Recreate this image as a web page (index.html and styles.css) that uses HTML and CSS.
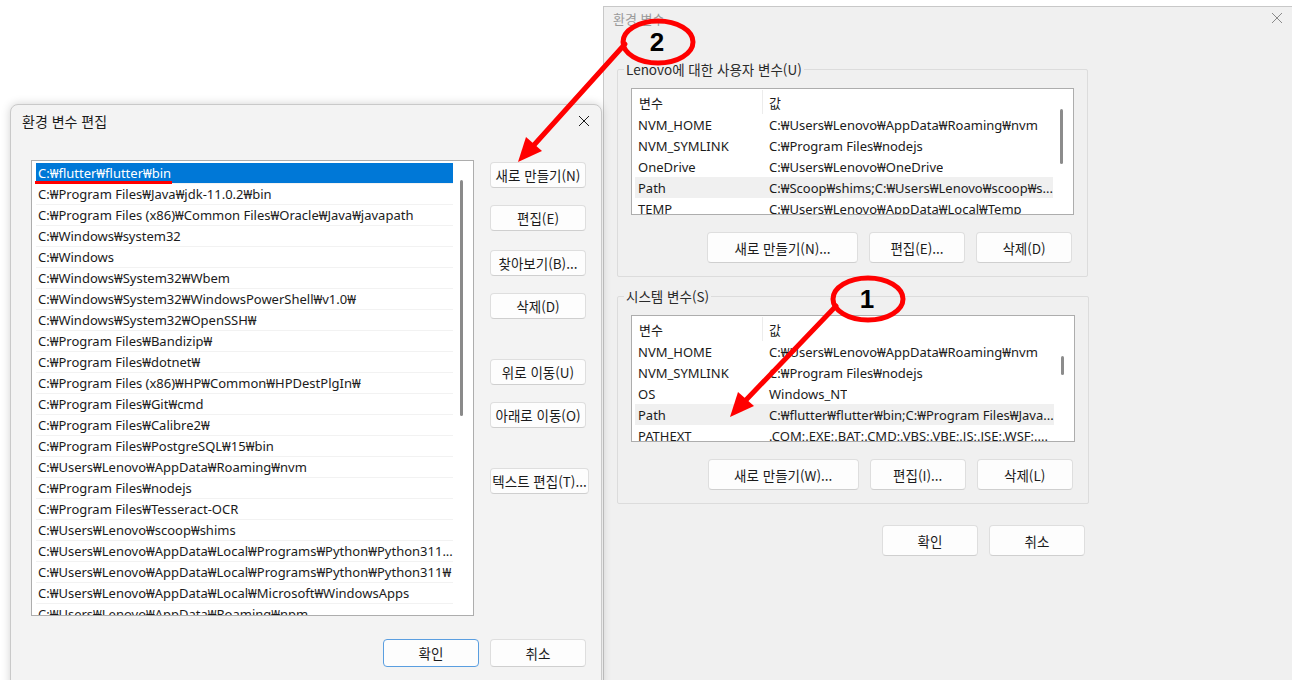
FILE: index.html
```html
<!DOCTYPE html>
<html lang="ko">
<head>
<meta charset="utf-8">
<title>환경 변수</title>
<link rel="stylesheet" href="styles.css">
</head>
<body>
<div class="desk">

  <div class="win env">
    <div class="titlebar inactive">
      <span class="title">환경 변수</span>
      <svg class="close" width="12" height="12" viewBox="0 0 12 12"><path d="M1 1 L11 11 M11 1 L1 11" stroke="#8a8a8a" stroke-width="1"/></svg>
    </div>
    <div class="env-body">
      <fieldset class="group">
        <legend>Lenovo에 대한 사용자 변수(U)</legend>
        <div class="vlist">
          <div class="vhead"><span class="c1">변수</span><span class="c2">값</span></div>
          <div class="vrows">
            <div class="vrow"><span class="c1">NVM_HOME</span><span class="c2">C:₩Users₩Lenovo₩AppData₩Roaming₩nvm</span></div>
            <div class="vrow"><span class="c1">NVM_SYMLINK</span><span class="c2">C:₩Program Files₩nodejs</span></div>
            <div class="vrow"><span class="c1">OneDrive</span><span class="c2">C:₩Users₩Lenovo₩OneDrive</span></div>
            <div class="vrow hl"><span class="c1">Path</span><span class="c2">C:₩Scoop₩shims;C:₩Users₩Lenovo₩scoop₩s...</span></div>
            <div class="vrow"><span class="c1">TEMP</span><span class="c2">C:₩Users₩Lenovo₩AppData₩Local₩Temp</span></div>
          </div>
          <div class="vthumb t1"></div>
        </div>
        <div class="grp-btns">
          <button class="btn wide">새로 만들기(N)...</button>
          <button class="btn">편집(E)...</button>
          <button class="btn">삭제(D)</button>
        </div>
      </fieldset>

      <fieldset class="group">
        <legend>시스템 변수(S)</legend>
        <div class="vlist">
          <div class="vhead"><span class="c1">변수</span><span class="c2">값</span></div>
          <div class="vrows">
            <div class="vrow"><span class="c1">NVM_HOME</span><span class="c2">C:₩Users₩Lenovo₩AppData₩Roaming₩nvm</span></div>
            <div class="vrow"><span class="c1">NVM_SYMLINK</span><span class="c2">C:₩Program Files₩nodejs</span></div>
            <div class="vrow"><span class="c1">OS</span><span class="c2">Windows_NT</span></div>
            <div class="vrow hl"><span class="c1">Path</span><span class="c2">C:₩flutter₩flutter₩bin;C:₩Program Files₩Java...</span></div>
            <div class="vrow"><span class="c1">PATHEXT</span><span class="c2">.COM;.EXE;.BAT;.CMD;.VBS;.VBE;.JS;.JSE;.WSF;....</span></div>
          </div>
          <div class="vthumb t2"></div>
        </div>
        <div class="grp-btns">
          <button class="btn wide">새로 만들기(W)...</button>
          <button class="btn">편집(I)...</button>
          <button class="btn">삭제(L)</button>
        </div>
      </fieldset>

      <div class="env-foot">
        <button class="btn">확인</button>
        <button class="btn">취소</button>
      </div>
    </div>
  </div>

  <div class="win edit">
    <div class="titlebar">
      <span class="title">환경 변수 편집</span>
      <svg class="close" width="12" height="12" viewBox="0 0 12 12"><path d="M1 1 L11 11 M11 1 L1 11" stroke="#1a1a1a" stroke-width="1"/></svg>
    </div>
    <div class="edit-body">
      <div class="plist">
        <div class="prows">
          <div class="prow sel"><span class="uline">C:₩flutter₩flutter₩bin</span></div>
          <div class="prow">C:₩Program Files₩Java₩jdk-11.0.2₩bin</div>
          <div class="prow">C:₩Program Files (x86)₩Common Files₩Oracle₩Java₩javapath</div>
          <div class="prow">C:₩Windows₩system32</div>
          <div class="prow">C:₩Windows</div>
          <div class="prow">C:₩Windows₩System32₩Wbem</div>
          <div class="prow">C:₩Windows₩System32₩WindowsPowerShell₩v1.0₩</div>
          <div class="prow">C:₩Windows₩System32₩OpenSSH₩</div>
          <div class="prow">C:₩Program Files₩Bandizip₩</div>
          <div class="prow">C:₩Program Files₩dotnet₩</div>
          <div class="prow">C:₩Program Files (x86)₩HP₩Common₩HPDestPlgIn₩</div>
          <div class="prow">C:₩Program Files₩Git₩cmd</div>
          <div class="prow">C:₩Program Files₩Calibre2₩</div>
          <div class="prow">C:₩Program Files₩PostgreSQL₩15₩bin</div>
          <div class="prow">C:₩Users₩Lenovo₩AppData₩Roaming₩nvm</div>
          <div class="prow">C:₩Program Files₩nodejs</div>
          <div class="prow">C:₩Program Files₩Tesseract-OCR</div>
          <div class="prow">C:₩Users₩Lenovo₩scoop₩shims</div>
          <div class="prow">C:₩Users₩Lenovo₩AppData₩Local₩Programs₩Python₩Python311...</div>
          <div class="prow">C:₩Users₩Lenovo₩AppData₩Local₩Programs₩Python₩Python311₩</div>
          <div class="prow">C:₩Users₩Lenovo₩AppData₩Local₩Microsoft₩WindowsApps</div>
          <div class="prow">C:₩Users₩Lenovo₩AppData₩Roaming₩npm</div>
        </div>
        <div class="pthumb"></div>
      </div>
      <div class="side-btns">
        <button class="btn">새로 만들기(N)</button>
        <button class="btn">편집(E)</button>
        <button class="btn b3">찾아보기(B)...</button>
        <button class="btn">삭제(D)</button>
        <button class="btn sp1">위로 이동(U)</button>
        <button class="btn">아래로 이동(O)</button>
        <button class="btn sp2 txt">텍스트 편집(T)...</button>
      </div>
    </div>
    <div class="edit-foot">
      <button class="btn def">확인</button>
      <button class="btn">취소</button>
    </div>
  </div>

  <svg class="marks" width="1292" height="680" viewBox="0 0 1292 680">
    <line x1="625" y1="44" x2="534" y2="145" stroke="#ff0000" stroke-width="5" stroke-linecap="round"/>
    <polygon points="518,162 542,151 526,137" fill="#ff0000"/>
    <ellipse cx="658" cy="42" rx="35" ry="21" fill="none" stroke="#ff0000" stroke-width="5"/>
    <text x="657" y="51" class="num">2</text>

    <line x1="836" y1="306" x2="746" y2="400" stroke="#ff0000" stroke-width="5" stroke-linecap="round"/>
    <polygon points="730,417 754,406 738,392" fill="#ff0000"/>
    <ellipse cx="868" cy="299" rx="35" ry="21" fill="none" stroke="#ff0000" stroke-width="5"/>
    <text x="867" y="308" class="num">1</text>
  </svg>
</div>
</body>
</html>
```

FILE: styles.css
```css
* { box-sizing: border-box; }
html, body { margin: 0; padding: 0; background: #ffffff; }
body {
  font-family: "Noto Sans", "Noto Sans CJK KR", sans-serif;
  font-size: 13px;
  color: #1b1b1b;
  overflow: hidden;
}
.desk { position: relative; width: 1292px; height: 680px; overflow: hidden; }

.win { position: absolute; background: #f0f0f0; }
.env {
  left: 603px; top: 6px; width: 690px; height: 700px;
  border: 1px solid #c8c8c8;
  background: #f0f0f0;
}
.edit {
  left: 10px; top: 104px; width: 592px; height: 600px;
  border: 1px solid #c9c9c9;
  border-radius: 8px 8px 0 0;
  background: #f3f3f3;
  box-shadow: 0 0 10px rgba(0,0,0,0.18);
  display: flex; flex-direction: column;
}

.titlebar { display: flex; align-items: center; justify-content: space-between; height: 34px; }
.env .titlebar { height: 22px; padding: 0 9px 0 9px; }
.edit .titlebar { padding: 0 11px 3px 11px; }
.title { font-family: "Noto Sans CJK KR", sans-serif; font-size: 14px; }
.inactive .title { color: #9a9a9a; font-size: 13px; }

.env-body { padding: 30px 0 0 13px; width: 484px; }
.group {
  margin: 0 0 9px 0;
  padding: 9px 13px 13px 13px;
  border: 1px solid #dcdcdc;
  border-radius: 2px;
  width: 470px;
}
.group legend {
  padding: 0 2px; margin-left: -7px;
  font-family: "Noto Sans CJK KR", sans-serif; font-size: 13.5px;
  color: #2a2a2a;
}
.vlist {
  position: relative;
  height: 127px;
  background: #fff;
  border: 1px solid #adadad;
  padding: 1px 20px 0 3px;
  overflow: hidden;
}
.vhead, .vrow { display: flex; height: 21px; align-items: center; white-space: nowrap; }
.vhead { height: 24px; font-family: "Noto Sans CJK KR", sans-serif; }
.vhead .c1 { border-right: 1px solid #ececec; height: 24px; display: flex; align-items: center; }
.c1 { width: 128px; padding-left: 3px; flex: none; }
.c2 { padding-left: 6px; overflow: hidden; }
.vhead .c1 { padding-left: 4px; }
.vrow.hl { background: #f0f0f0; }
.vthumb { position: absolute; right: 10px; width: 3px; border-radius: 2px; background: #8c8c8c; }
.t1 { top: 20px; height: 55px; }
.t2 { top: 40px; height: 19px; }

.grp-btns { display: flex; justify-content: flex-end; gap: 11px; margin-top: 17px; padding-right: 2px; }
.btn {
  font-family: "Noto Sans CJK KR", sans-serif;
  font-size: 13.5px;
  color: #1b1b1b;
  background: #fdfdfd;
  border: 1px solid #dedede;
  border-bottom-color: #cfcfcf;
  border-radius: 4px;
  width: 96px; height: 31px;
  padding: 0;
  white-space: nowrap;
}
.btn.wide { width: 151px; }
.env-foot { display: flex; gap: 11px; padding-left: 265px; margin-top: 21px; }

.edit-body { display: flex; padding: 21px 0 0 20px; }
.plist {
  position: relative;
  width: 443px; height: 456px;
  background: #fff;
  border: 1px solid #adadad;
  padding: 2px 20px 0 4px;
  overflow: hidden;
}
.prow {
  height: 21px; line-height: 21px;
  padding-left: 2px;
  white-space: nowrap;
  border-bottom: 1px solid #f2f2f2;
}
.prow.sel { background: #0078d7; color: #fff; }
.uline { position: relative; display: inline-block; line-height: 20px; }
.uline::after {
  content: ""; position: absolute; left: -3px; right: -1px; bottom: -1px;
  height: 3px; background: #ff0000;
}
.pthumb { position: absolute; right: 10px; top: 19px; width: 3px; height: 236px; background: #8a8a8a; border-radius: 2px; }

.side-btns { display: flex; flex-direction: column; margin-left: 16px; margin-top: 2px; }
.side-btns .btn { height: 26px; margin-bottom: 17px; }
.side-btns .b3 { margin-top: 2px; }
.side-btns .sp1 { margin-top: 23px; }
.side-btns .sp2 { margin-top: 23px; }
.side-btns .txt { width: 99px; }

.edit-foot { display: flex; gap: 11px; padding-left: 372px; margin-top: 23px; }
.edit-foot .btn { height: 28px; }
.btn.def { border: 1px solid #5a9ee0; }

.marks { position: absolute; left: 0; top: 0; pointer-events: none; }
.num { font-family: "Liberation Sans", sans-serif; font-weight: bold; font-size: 26px; text-anchor: middle; fill: #000; }
```
